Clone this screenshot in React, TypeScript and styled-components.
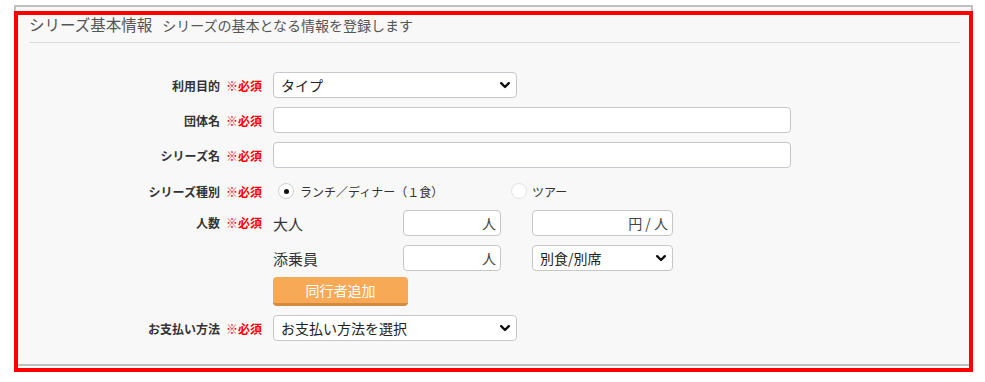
import React from "react";
import styled, { createGlobalStyle } from "styled-components";

const GlobalStyle = createGlobalStyle`
  html, body { margin: 0; padding: 0; background: #ffffff; }
  body { font-family: "Noto Sans CJK JP", "Noto Sans", sans-serif; color: #333; }
  * { box-sizing: border-box; }
`;

const Page = styled.div`
  position: relative;
  width: 985px;
  height: 382px;
  padding: 5px 0 0 14px;
`;

const Panel = styled.section`
  width: 959px;
  height: 361px;
  border: 2px solid #c0c0c0;
  background: #f8f8f8;
  padding: 0 11px 0 13px;
`;

const RedFrame = styled.div`
  position: absolute;
  left: 14px;
  top: 11px;
  width: 959px;
  height: 361px;
  border: 4px solid #ff0000;
  pointer-events: none;
`;

const Header = styled.header`
  height: 36px;
  display: flex;
  align-items: center;
  border-bottom: 1px solid #dcdcdc;
  color: #555;
  white-space: nowrap;
`;

const Title = styled.h2`
  margin: 0;
  font-size: 15.5px;
  font-weight: normal;
  line-height: 1;
`;

const Subtitle = styled.span`
  margin-left: 10px;
  font-size: 14px;
  line-height: 1;
`;

const Form = styled.div`
  display: flex;
  flex-direction: column;
  gap: 9px;
  padding-top: 29px;
`;

const Row = styled.div<{ $h?: number; $top?: boolean; $mt?: number; $mb?: number }>`
  display: flex;
  align-items: ${(p) => (p.$top ? "flex-start" : "center")};
  min-height: ${(p) => p.$h ?? 26}px;
  margin-top: ${(p) => p.$mt ?? 0}px;
  margin-bottom: ${(p) => p.$mb ?? 0}px;
`;

const LabelCell = styled.div<{ $h?: number }>`
  width: 233px;
  margin-right: 11px;
  flex: none;
  text-align: right;
  font-size: 12px;
  font-weight: bold;
  color: #333;
  white-space: nowrap;
  ${(p) => (p.$h ? `height: ${p.$h}px; line-height: ${p.$h}px;` : "")}
`;

const Required = styled.span`
  margin-left: 6px;
  color: #ff0000;
`;

const Content = styled.div`
  display: flex;
  flex-direction: column;
`;

const SelectWrap = styled.div<{ $w: number }>`
  position: relative;
  width: ${(p) => p.$w}px;
  height: 26px;
`;

const Select = styled.select`
  appearance: none;
  -webkit-appearance: none;
  width: 100%;
  height: 100%;
  border: 1px solid #c4c8cc;
  border-radius: 4px;
  background: #fff;
  padding: 0 24px 0 7px;
  font-family: inherit;
  font-size: 14px;
  color: #222;
  outline: none;
`;

const Chevron = styled.svg`
  position: absolute;
  right: 7px;
  top: 10px;
  pointer-events: none;
`;

const TextInput = styled.input<{ $w: number }>`
  width: ${(p) => p.$w}px;
  height: 26px;
  border: 1px solid #c4c8cc;
  border-radius: 4px;
  background: #fff;
  padding: 0 7px;
  font-family: inherit;
  font-size: 14px;
  outline: none;
`;

const RadioGroup = styled.div`
  display: flex;
  align-items: center;
  height: 24px;
`;

const RadioOption = styled.label<{ $w?: number; $gap: number }>`
  display: flex;
  align-items: center;
  gap: ${(p) => p.$gap}px;
  ${(p) => (p.$w ? `width: ${p.$w}px;` : "")}
  padding-left: 5px;
  font-size: 12px;
  color: #333;
  white-space: nowrap;
`;

const RadioCircle = styled.span<{ $on?: boolean }>`
  width: 16px;
  height: 16px;
  border-radius: 50%;
  background: #fff;
  border: 1px solid ${(p) => (p.$on ? "#d0d0d0" : "#e4e4e4")};
  display: flex;
  align-items: center;
  justify-content: center;
  &::after {
    content: "";
    width: 5px;
    height: 5px;
    border-radius: 50%;
    background: ${(p) => (p.$on ? "#111" : "transparent")};
  }
`;

const PersonGrid = styled.div`
  display: grid;
  grid-template-columns: 99px 98px 141px;
  column-gap: 31px;
  row-gap: 9px;
  grid-auto-rows: 26px;
`;

const SubLabel = styled.div`
  font-size: 15px;
  color: #333;
  line-height: 26px;
  padding-top: 1px;
`;

const UnitBox = styled.div`
  display: flex;
  align-items: center;
  height: 26px;
  border: 1px solid #c4c8cc;
  border-radius: 4px;
  background: #fff;
  padding: 0 4px 0 6px;
`;

const UnitInput = styled.input`
  flex: 1;
  min-width: 0;
  border: none;
  outline: none;
  background: transparent;
  font-family: inherit;
  font-size: 14px;
`;

const Unit = styled.span`
  font-size: 14px;
  color: #444;
  white-space: nowrap;
`;

const AddButton = styled.button`
  margin-top: 6px;
  width: 135px;
  height: 29px;
  border: none;
  border-bottom: 3px solid #d38b40;
  border-radius: 4px;
  background: #f7a956;
  color: #fff;
  font-family: inherit;
  font-size: 14px;
  padding: 0;
`;

const ChevronIcon = () => (
  <Chevron width="10" height="7" viewBox="0 0 10 7">
    <path d="M1.2 1.2 L5 5 L8.8 1.2" fill="none" stroke="#111" strokeWidth="2.4" strokeLinecap="round" strokeLinejoin="round" />
  </Chevron>
);

const Label = ({ text, h }: { text: string; h?: number }) => (
  <LabelCell $h={h}>
    {text}
    <Required>※必須</Required>
  </LabelCell>
);

export default function App() {
  return (
    <>
      <GlobalStyle />
      <Page>
        <Panel>
          <Header>
            <Title>シリーズ基本情報</Title>
            <Subtitle>シリーズの基本となる情報を登録します</Subtitle>
          </Header>
          <Form>
            <Row>
              <Label text="利用目的" />
              <SelectWrap $w={244}>
                <Select defaultValue="type">
                  <option value="type">タイプ</option>
                </Select>
                <ChevronIcon />
              </SelectWrap>
            </Row>
            <Row>
              <Label text="団体名" />
              <TextInput $w={518} />
            </Row>
            <Row>
              <Label text="シリーズ名" />
              <TextInput $w={518} />
            </Row>
            <Row $h={24} $mt={2} $mb={-2}>
              <Label text="シリーズ種別" />
              <RadioGroup>
                <RadioOption $w={233} $gap={6}>
                  <RadioCircle $on />
                  ランチ／ディナー（１食）
                </RadioOption>
                <RadioOption $gap={5}>
                  <RadioCircle />
                  ツアー
                </RadioOption>
              </RadioGroup>
            </Row>
            <Row $top>
              <Label text="人数" h={26} />
              <Content>
                <PersonGrid>
                  <SubLabel>大人</SubLabel>
                  <UnitBox>
                    <UnitInput />
                    <Unit>人</Unit>
                  </UnitBox>
                  <UnitBox>
                    <UnitInput />
                    <Unit>円 / 人</Unit>
                  </UnitBox>
                  <SubLabel>添乗員</SubLabel>
                  <UnitBox>
                    <UnitInput />
                    <Unit>人</Unit>
                  </UnitBox>
                  <SelectWrap $w={141}>
                    <Select defaultValue="a">
                      <option value="a">別食/別席</option>
                    </Select>
                    <ChevronIcon />
                  </SelectWrap>
                </PersonGrid>
                <AddButton>同行者追加</AddButton>
              </Content>
            </Row>
            <Row>
              <Label text="お支払い方法" />
              <SelectWrap $w={244}>
                <Select defaultValue="p">
                  <option value="p">お支払い方法を選択</option>
                </Select>
                <ChevronIcon />
              </SelectWrap>
            </Row>
          </Form>
        </Panel>
        <RedFrame />
      </Page>
    </>
  );
}
